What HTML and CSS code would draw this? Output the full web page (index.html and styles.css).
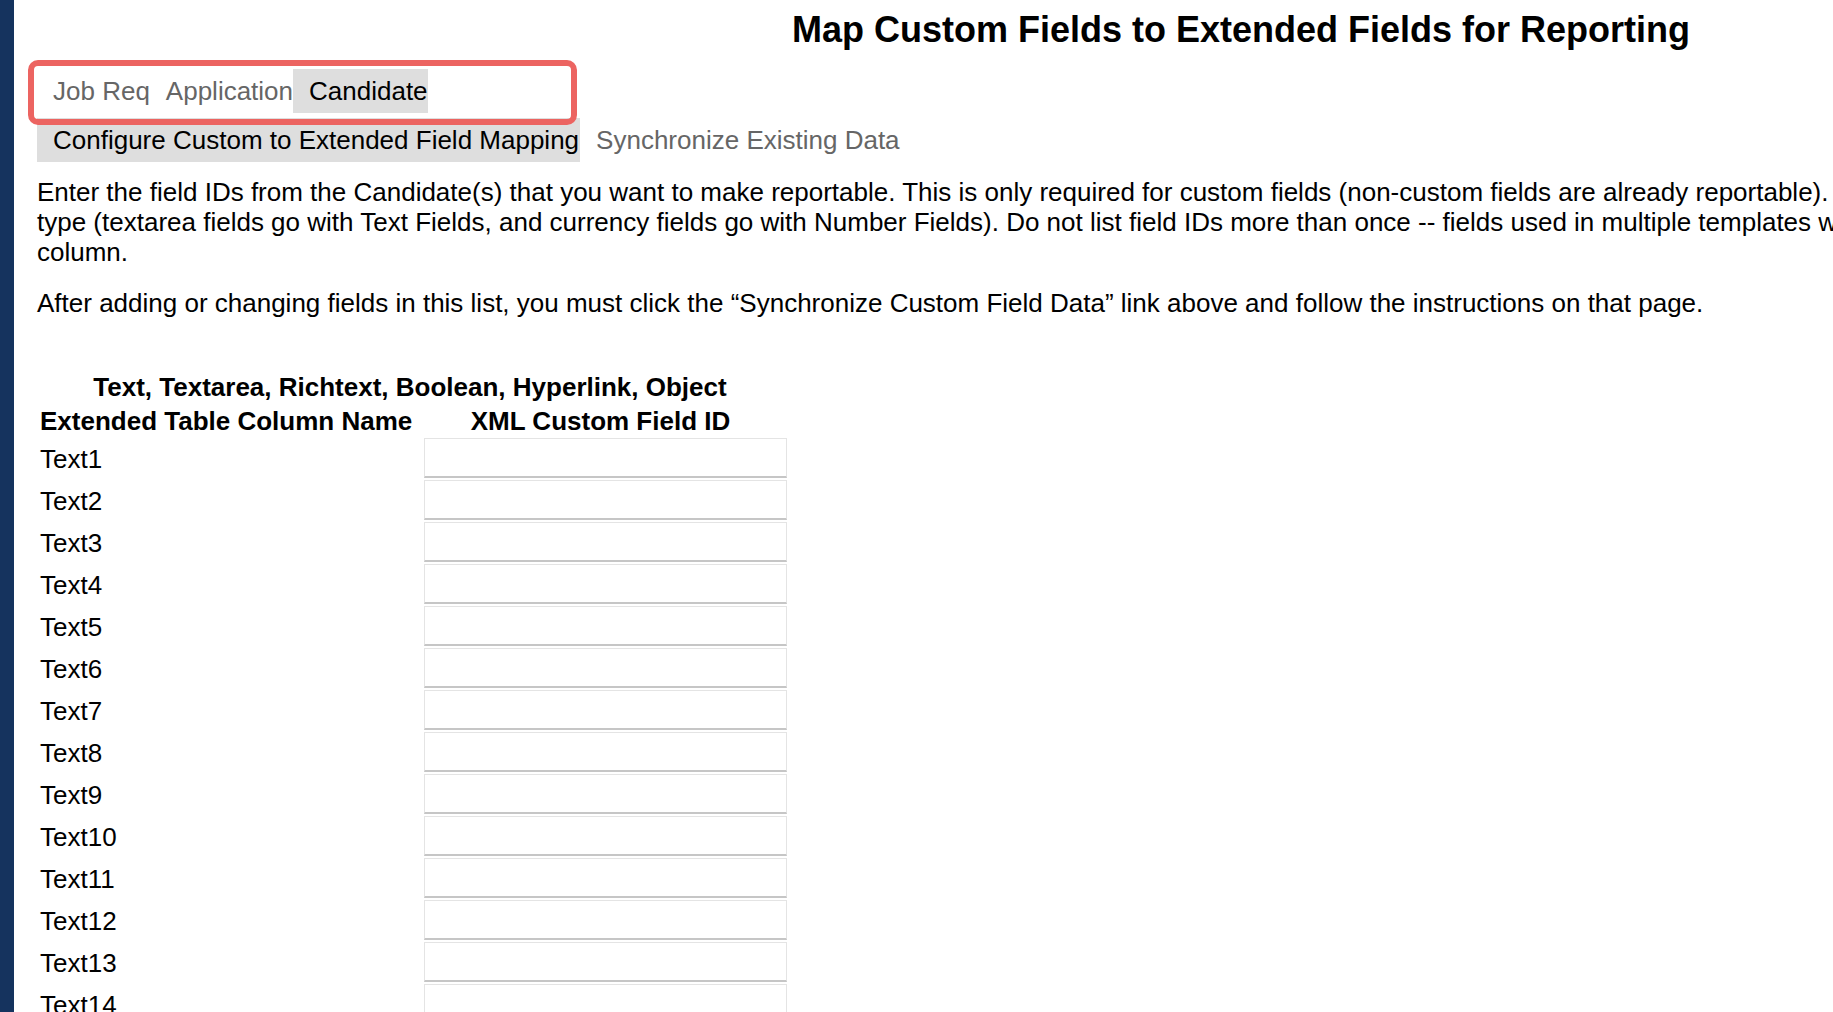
FILE: index.html
```html
<!DOCTYPE html>
<html>
<head>
<meta charset="utf-8">
<title>Map Custom Fields to Extended Fields for Reporting</title>
<link rel="stylesheet" href="styles.css">
</head>
<body>
<div class="page">
  <div class="sidebar"></div>
  <main class="main">
    <h1 class="title">Map Custom Fields to Extended Fields for Reporting</h1>
    <div class="tabs-wrap">
      <nav class="tabs">
        <a class="tab">Job Req</a>
        <a class="tab">Application</a>
        <a class="tab active">Candidate</a>
      </nav>
      <div class="highlight"></div>
    </div>
    <nav class="tabs subtabs">
      <a class="tab active">Configure Custom to Extended Field Mapping</a>
      <a class="tab">Synchronize Existing Data</a>
    </nav>
    <p class="intro">Enter the field IDs from the Candidate(s) that you want to make reportable. This is only required for custom fields (non-custom fields are already reportable). Put each field ID next to the column for its field<br>type (textarea fields go with Text Fields, and currency fields go with Number Fields). Do not list field IDs more than once -- fields used in multiple templates will share the same extended table<br>column.</p>
    <p class="intro second">After adding or changing fields in this list, you must click the “Synchronize Custom Field Data” link above and follow the instructions on that page.</p>
    <table class="map">
      <thead>
        <tr><th colspan="2" class="group">Text, Textarea, Richtext, Boolean, Hyperlink, Object</th></tr>
        <tr><th class="name">Extended Table Column Name</th><th class="xml">XML Custom Field ID</th></tr>
      </thead>
      <tbody>
        <tr><td class="label">Text1</td><td class="field"><input type="text"></td></tr>
        <tr><td class="label">Text2</td><td class="field"><input type="text"></td></tr>
        <tr><td class="label">Text3</td><td class="field"><input type="text"></td></tr>
        <tr><td class="label">Text4</td><td class="field"><input type="text"></td></tr>
        <tr><td class="label">Text5</td><td class="field"><input type="text"></td></tr>
        <tr><td class="label">Text6</td><td class="field"><input type="text"></td></tr>
        <tr><td class="label">Text7</td><td class="field"><input type="text"></td></tr>
        <tr><td class="label">Text8</td><td class="field"><input type="text"></td></tr>
        <tr><td class="label">Text9</td><td class="field"><input type="text"></td></tr>
        <tr><td class="label">Text10</td><td class="field"><input type="text"></td></tr>
        <tr><td class="label">Text11</td><td class="field"><input type="text"></td></tr>
        <tr><td class="label">Text12</td><td class="field"><input type="text"></td></tr>
        <tr><td class="label">Text13</td><td class="field"><input type="text"></td></tr>
        <tr><td class="label">Text14</td><td class="field"><input type="text"></td></tr>
        <tr><td class="label">Text15</td><td class="field"><input type="text"></td></tr>
        <tr><td class="label">Text16</td><td class="field"><input type="text"></td></tr>
      </tbody>
    </table>
  </main>
</div>
</body>
</html>
```
FILE: styles.css
```css
html, body {
  margin: 0;
  padding: 0;
  overflow: hidden;
  background: #ffffff;
}
body {
  font-family: "Liberation Sans", Arial, Helvetica, sans-serif;
  font-size: 26px;
  color: #000;
}
.page {
  display: flex;
  min-height: 1012px;
}
.sidebar {
  flex: 0 0 14px;
  background: #15335e;
}
.main {
  flex: 0 0 2454px;
  width: 2454px;
  padding-left: 23px;
  box-sizing: border-box;
}
.title {
  margin: 9px 0 0 -23px;
  font-size: 36px;
  line-height: 41px;
  font-weight: bold;
  text-align: center;
}
.tabs-wrap {
  position: relative;
  margin-top: 19px;
  width: 540px;
}
.tabs {
  display: flex;
  align-items: stretch;
  height: 44px;
}
.tab {
  display: block;
  line-height: 44px;
  padding: 0 0 0 16px;
  color: #666;
  text-decoration: none;
  white-space: nowrap;
}
.tab.active {
  background: #dedede;
  color: #000;
}
.highlight {
  position: absolute;
  left: -9px;
  top: -9px;
  width: 549px;
  height: 65px;
  box-sizing: border-box;
  border: 6px solid #ec6461;
  border-radius: 10px;
  pointer-events: none;
}
.subtabs {
  margin-top: 5px;
}
.subtabs .tab.active {
  padding-right: 1px;
}
.intro {
  margin: 15px 0 0;
  line-height: 30px;
  white-space: nowrap;
}
.intro.second {
  margin-top: 21px;
}
.map {
  margin-top: 52px;
  border-collapse: collapse;
}
.map th {
  font-weight: bold;
  height: 34px;
  padding: 0;
  line-height: 34px;
  white-space: nowrap;
}
.map th.group {
  text-align: center;
  padding-right: 4px;
}
.map th.name {
  text-align: left;
  padding-left: 3px;
}
.map th.xml {
  text-align: center;
  padding-right: 10px;
}
.map td {
  padding: 0;
}
.map td.label {
  width: 384px;
  padding-left: 3px;
  height: 42px;
}
.map td.field {
  width: 363px;
  padding: 0 0 2px;
  vertical-align: top;
}
.map input {
  display: block;
  width: 363px;
  height: 40px;
  box-sizing: border-box;
  margin: 0;
  border: 1px solid #e4e4e4;
  border-bottom: 2px solid #c6c6c6;
  background: #fff;
  font-family: inherit;
  font-size: 20px;
  padding: 0 6px;
}
```
